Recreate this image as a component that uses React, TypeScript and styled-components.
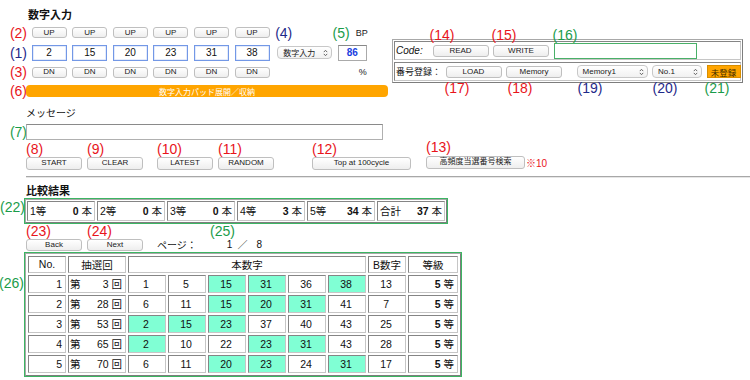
import React from 'react';
import styled, { createGlobalStyle, css } from 'styled-components';

const GlobalStyle = createGlobalStyle`
  html, body {
    margin: 0;
    padding: 0;
    background: #fff;
  }
  body {
    width: 750px;
    height: 380px;
    overflow: hidden;
    font-family: 'Liberation Sans', 'Noto Sans CJK JP', sans-serif;
    color: #111;
  }
  * {
    box-sizing: border-box;
  }
`;

type Tone = 'red' | 'navy' | 'green';
const toneColor: Record<Tone, string> = {
  red: '#e8141b',
  navy: '#1f2a8a',
  green: '#1a9c4a',
};

const Mark = styled.span<{ $tone: Tone }>`
  font-family: 'Liberation Sans', sans-serif;
  font-size: 14px;
  line-height: 14px;
  color: ${(p) => toneColor[p.$tone]};
  white-space: nowrap;
`;

// annotation label that hangs over/under a control
const Callout = styled(Mark)<{ $below?: boolean; $dx?: number; $dy?: number }>`
  position: absolute;
  left: ${(p) => p.$dx ?? 0}px;
  ${(p) =>
    p.$below
      ? css`top: calc(100% + ${p.$dy ?? 3}px);`
      : css`bottom: calc(100% + ${p.$dy ?? 3}px);`}
`;

const Anchor = styled.span<{ $ml?: number }>`
  position: relative;
  display: inline-flex;
  margin-left: ${(p) => p.$ml ?? 0}px;
`;

const Btn = styled.button<{ $w: number; $h?: number }>`
  width: ${(p) => p.$w}px;
  height: ${(p) => p.$h ?? 12}px;
  padding: 0;
  margin: 0;
  font-family: 'Liberation Sans', 'Noto Sans CJK JP', sans-serif;
  font-size: 8px;
  line-height: 1;
  color: #1a1a1a;
  background: linear-gradient(#ffffff, #eeeeee);
  border: 1px solid #bfbfbf;
  border-radius: 3px;
  display: flex;
  align-items: center;
  justify-content: center;
  white-space: nowrap;
`;

const FakeSelect = styled.div<{ $w: number }>`
  width: ${(p) => p.$w}px;
  height: 13px;
  border: 1px solid #c8c8c8;
  border-radius: 4px;
  background: linear-gradient(#ffffff, #f1f1f1);
  display: flex;
  align-items: center;
  justify-content: space-between;
  padding: 0 3px 0 5px;
  font-size: 8px;
  color: #222;
  white-space: nowrap;
`;

const UpDown = () => (
  <svg width="5" height="8" viewBox="0 0 5 8">
    <path
      d="M0.8 3.1 L2.5 1.3 L4.2 3.1 M0.8 4.9 L2.5 6.7 L4.2 4.9"
      fill="none"
      stroke="#555"
      strokeWidth="0.9"
    />
  </svg>
);

/* ---------- top: number pad + code panel ---------- */

const Top = styled.div`
  display: flex;
  align-items: flex-start;
`;

const PadColumn = styled.div`
  width: 388px;
  padding-top: 9px;
`;

const Heading = styled.div<{ $indent?: number; $top?: number }>`
  margin-left: ${(p) => p.$indent ?? 26}px;
  margin-top: ${(p) => p.$top ?? 0}px;
  font-size: 11px;
  line-height: 13px;
  font-weight: bold;
`;

const PadGrid = styled.div`
  margin-top: 4px;
  display: grid;
  grid-template-columns: 26px repeat(6, 35px) 57px 30px;
  grid-template-rows: 13px 16px 12px;
  column-gap: 5.6px;
  row-gap: 5.5px;
  align-items: center;
`;

const Gutter = styled(Mark)`
  justify-self: end;
  margin-right: -1px;
`;

const NumBox = styled.div`
  height: 16px;
  border: 1px solid #7398e6;
  box-shadow: inset 0 0 0 0.5px #c9d8f7;
  font-size: 10px;
  display: flex;
  align-items: center;
  justify-content: center;
`;

const BpHead = styled.div`
  grid-column: 8 / 10;
  display: flex;
  justify-content: space-between;
  align-items: center;
`;

const BpGroup = styled.span`
  display: flex;
  align-items: center;
  gap: 6px;
  margin-left: -5px;
`;

const Small = styled.span`
  font-size: 9px;
  color: #222;
`;

const BpBox = styled.div`
  width: 29px;
  height: 16px;
  border: 1px solid #aaa;
  border-top-color: #888;
  font-size: 10px;
  font-weight: bold;
  color: #1a3ee0;
  display: flex;
  align-items: center;
  justify-content: center;
`;

const Percent = styled(Small)`
  grid-column: 9;
  justify-self: end;
  margin-right: 1px;
`;

const GutterRow = styled.div<{ $gutter?: number; $top?: number }>`
  display: grid;
  grid-template-columns: ${(p) => p.$gutter ?? 26}px auto;
  align-items: center;
  margin-top: ${(p) => p.$top ?? 0}px;
`;

const PadToggle = styled.div`
  width: 362px;
  height: 12px;
  background: #ffa500;
  border-radius: 4px;
  color: #fff;
  font-size: 8px;
  display: flex;
  align-items: center;
  justify-content: center;
`;

const CodePanel = styled.div`
  margin: 39px 0 0 4px;
  width: 351px;
  border: 1px solid;
  border-color: #a8a8a8 #7d7d7d #7d7d7d #a8a8a8;
  padding: 1px;
  display: flex;
  flex-direction: column;
  gap: 2px;
`;

const insetCell = css`
  border: 1px solid;
  border-color: #858585 #c6c6c6 #c6c6c6 #858585;
`;

const PanelRow = styled.div`
  height: 19px;
  ${insetCell};
  display: flex;
  align-items: center;
  gap: 4.5px;
  padding-left: 1px;
`;

const PanelLabel = styled.span<{ $w: number; $italic?: boolean }>`
  width: ${(p) => p.$w}px;
  font-size: ${(p) => (p.$italic ? 10 : 9)}px;
  font-style: ${(p) => (p.$italic ? 'italic' : 'normal')};
  white-space: nowrap;
`;

const CodeInput = styled.div`
  width: 143px;
  height: 16px;
  border: 1px solid #49b068;
`;

const Unregistered = styled.div`
  width: 34px;
  height: 13px;
  background: #ffa500;
  border: 1px solid #d98e00;
  font-size: 8.5px;
  color: #3a2a00;
  display: flex;
  align-items: center;
  justify-content: center;
`;

/* ---------- message + actions ---------- */

const Label = styled.div`
  margin: 10px 0 0 26px;
  font-size: 10px;
  line-height: 12px;
`;

const MessageBox = styled.div`
  width: 357px;
  height: 16px;
  border: 1px solid #b0b0b0;
  border-top-color: #8a8a8a;
`;

const ActionRow = styled.div`
  display: flex;
  align-items: flex-end;
  padding-left: 26px;
`;

const Stack = styled.div<{ $ml?: number }>`
  display: flex;
  flex-direction: column;
  align-items: flex-start;
  gap: 1px;
  margin-left: ${(p) => p.$ml ?? 0}px;
`;

const StackLine = styled.div`
  display: flex;
  align-items: center;
  gap: 1px;
`;

const Note = styled.span`
  font-size: 10px;
  color: #e8141b;
`;

const Rule = styled.div`
  margin: 6px 0 0 26px;
  height: 2px;
  border-top: 1px solid #a8a8a8;
  border-bottom: 1px solid #e6e6e6;
`;

/* ---------- results ---------- */

const GreenFrame = styled.div<{ $w?: number }>`
  border: 1px solid #3cb563;
  width: ${(p) => (p.$w ? `${p.$w}px` : 'auto')};
`;

const SummaryGrid = styled.div`
  display: grid;
  grid-template-columns: repeat(6, 68px);
  gap: 2px;
  padding: 1px;
  border: 1px solid;
  border-color: #a8a8a8 #7d7d7d #7d7d7d #a8a8a8;
`;

const SumCell = styled.div`
  height: 20px;
  ${insetCell};
  display: flex;
  align-items: center;
  justify-content: space-between;
  padding: 0 2px;
  font-size: 10.5px;
  white-space: nowrap;
`;

const PagerText = styled.div`
  height: 12px;
  display: flex;
  align-items: center;
  font-size: 10px;
  white-space: nowrap;
`;

const Gap = styled.span<{ $w: number }>`
  display: inline-block;
  width: ${(p) => p.$w}px;
`;

const TableRow = styled.div`
  display: flex;
  align-items: flex-start;
  margin-top: 1px;
`;

const TableGutter = styled.div`
  width: 24px;
  display: flex;
  justify-content: flex-end;
  padding-top: 24px;
`;

const Results = styled.table`
  border-collapse: separate;
  border-spacing: 2px;
  border: 1px solid;
  border-color: #a8a8a8 #7d7d7d #7d7d7d #a8a8a8;
  table-layout: fixed;
  width: 436px;
  font-size: 10.5px;
`;

const Th = styled.th`
  height: 17px;
  padding: 0;
  font-weight: normal;
  text-align: center;
  ${insetCell};
`;

const Td = styled.td<{ $hit?: boolean; $align?: 'left' | 'center' | 'right' }>`
  height: 18px;
  padding: 0 3px 0 1px;
  text-align: ${(p) => p.$align ?? 'center'};
  background: ${(p) => (p.$hit ? '#80ffd4' : '#fff')};
  ${insetCell};
  white-space: nowrap;
`;

const Split = styled.div`
  display: flex;
  justify-content: space-between;
`;

const picks = [2, 15, 20, 23, 31, 38];

const summary: [string, number][] = [
  ['1等', 0],
  ['2等', 0],
  ['3等', 0],
  ['4等', 3],
  ['5等', 34],
  ['合計', 37],
];

const rows = [
  { no: 1, draw: 3, nums: [1, 5, 15, 31, 36, 38], b: 13, grade: 5 },
  { no: 2, draw: 28, nums: [6, 11, 15, 20, 31, 41], b: 7, grade: 5 },
  { no: 3, draw: 53, nums: [2, 15, 23, 37, 40, 43], b: 25, grade: 5 },
  { no: 4, draw: 65, nums: [2, 10, 22, 23, 31, 43], b: 28, grade: 5 },
  { no: 5, draw: 70, nums: [6, 11, 20, 23, 24, 31], b: 17, grade: 5 },
];

const App = () => {
  return (
    <>
      <GlobalStyle />
      <Top>
        <PadColumn>
          <Heading $indent={28}>数字入力</Heading>
          <PadGrid>
            <Gutter $tone="red">(2)</Gutter>
            {picks.map((_, i) => (
              <Btn key={'up' + i} $w={35} $h={11}>UP</Btn>
            ))}
            <BpHead>
              <Mark $tone="navy">(4)</Mark>
              <BpGroup>
                <Mark $tone="green">(5)</Mark>
                <Small>BP</Small>
              </BpGroup>
            </BpHead>

            <Gutter $tone="navy">(1)</Gutter>
            {picks.map((n) => (
              <NumBox key={'n' + n}>{n}</NumBox>
            ))}
            <Anchor $ml={2}>
              <FakeSelect $w={55}>
                数字入力
                <UpDown />
              </FakeSelect>
            </Anchor>
            <BpBox>86</BpBox>

            <Gutter $tone="red">(3)</Gutter>
            {picks.map((_, i) => (
              <Btn key={'dn' + i} $w={35} $h={11}>DN</Btn>
            ))}
            <Percent>%</Percent>
          </PadGrid>
          <GutterRow $top={6}>
            <Gutter $tone="red">(6)</Gutter>
            <PadToggle>数字入力パッド展開／収納</PadToggle>
          </GutterRow>
        </PadColumn>

        <CodePanel>
          <PanelRow>
            <PanelLabel $w={32} $italic>Code:</PanelLabel>
            <Anchor>
              <Btn $w={56}>READ</Btn>
              <Callout $tone="red" $dx={-3} $dy={3}>(14)</Callout>
            </Anchor>
            <Anchor>
              <Btn $w={56}>WRITE</Btn>
              <Callout $tone="red" $dx={-1.5} $dy={3}>(15)</Callout>
            </Anchor>
            <Anchor>
              <CodeInput />
              <Callout $tone="green" $dx={-1} $dy={1}>(16)</Callout>
            </Anchor>
          </PanelRow>
          <PanelRow>
            <PanelLabel $w={50}>番号登録：</PanelLabel>
            <Anchor>
              <Btn $w={56}>LOAD</Btn>
              <Callout $tone="red" $below $dx={-1} $dy={3.5}>(17)</Callout>
            </Anchor>
            <Anchor>
              <Btn $w={56}>Memory</Btn>
              <Callout $tone="red" $below $dx={1.5} $dy={3.5}>(18)</Callout>
            </Anchor>
            <Anchor $ml={10}>
              <FakeSelect $w={71}>
                Memory1
                <UpDown />
              </FakeSelect>
              <Callout $tone="navy" $below $dx={1} $dy={3}>(19)</Callout>
            </Anchor>
            <Anchor>
              <FakeSelect $w={50}>
                No.1
                <UpDown />
              </FakeSelect>
              <Callout $tone="navy" $below $dx={0.5} $dy={3}>(20)</Callout>
            </Anchor>
            <Anchor>
              <Unregistered>未登録</Unregistered>
              <Callout $tone="green" $below $dx={-2} $dy={3}>(21)</Callout>
            </Anchor>
          </PanelRow>
        </CodePanel>
      </Top>

      <Label>メッセージ</Label>
      <GutterRow $top={3.5}>
        <Gutter $tone="green">(7)</Gutter>
        <MessageBox />
      </GutterRow>

      <ActionRow>
        <Stack>
          <Mark $tone="red">(8)</Mark>
          <Btn $w={56} $h={13}>START</Btn>
        </Stack>
        <Stack $ml={5}>
          <Mark $tone="red">(9)</Mark>
          <Btn $w={56} $h={13}>CLEAR</Btn>
        </Stack>
        <Stack $ml={14}>
          <Mark $tone="red">(10)</Mark>
          <Btn $w={56} $h={13}>LATEST</Btn>
        </Stack>
        <Stack $ml={5}>
          <Mark $tone="red">(11)</Mark>
          <Btn $w={56} $h={13}>RANDOM</Btn>
        </Stack>
        <Stack $ml={38}>
          <Mark $tone="red">(12)</Mark>
          <Btn $w={99} $h={13}>Top at 100cycle</Btn>
        </Stack>
        <Stack $ml={15}>
          <Mark $tone="red">(13)</Mark>
          <StackLine>
            <Btn $w={99} $h={13}>高頻度当選番号検索</Btn>
            <Note>※10</Note>
          </StackLine>
        </Stack>
      </ActionRow>

      <Rule />

      <Heading $top={7}>比較結果</Heading>
      <GutterRow $gutter={24}>
        <Gutter $tone="green" style={{ alignSelf: 'start', marginTop: 2 }}>
          (22)
        </Gutter>
        <GreenFrame $w={424}>
          <SummaryGrid>
            {summary.map(([name, count]) => (
              <SumCell key={name}>
                <span>{name}</span>
                <span>
                  <b>{count}</b> 本
                </span>
              </SumCell>
            ))}
          </SummaryGrid>
        </GreenFrame>
      </GutterRow>

      <ActionRow>
        <Stack>
          <Mark $tone="red">(23)</Mark>
          <Btn $w={56}>Back</Btn>
        </Stack>
        <Stack $ml={5}>
          <Mark $tone="red">(24)</Mark>
          <Btn $w={56}>Next</Btn>
        </Stack>
        <Stack $ml={14}>
          <Mark $tone="green" style={{ marginLeft: 53 }}>(25)</Mark>
          <PagerText>
            ページ：<Gap $w={30} />1<Gap $w={5} />／<Gap $w={9} />8
          </PagerText>
        </Stack>
      </ActionRow>

      <TableRow>
        <TableGutter>
          <Mark $tone="green">(26)</Mark>
        </TableGutter>
        <GreenFrame>
          <Results>
            <colgroup>
              <col style={{ width: 38 }} />
              <col style={{ width: 58 }} />
              {picks.map((_, i) => (
                <col key={i} style={{ width: 38 }} />
              ))}
              <col style={{ width: 38 }} />
              <col style={{ width: 50 }} />
            </colgroup>
            <thead>
              <tr>
                <Th>No.</Th>
                <Th>抽選回</Th>
                <Th colSpan={6}>本数字</Th>
                <Th>B数字</Th>
                <Th>等級</Th>
              </tr>
            </thead>
            <tbody>
              {rows.map((r) => (
                <tr key={r.no}>
                  <Td $align="right">{r.no}</Td>
                  <Td>
                    <Split>
                      <span>第</span>
                      <span>{r.draw} 回</span>
                    </Split>
                  </Td>
                  {r.nums.map((n, i) => (
                    <Td key={i} $hit={picks.includes(n)}>
                      {n}
                    </Td>
                  ))}
                  <Td>{r.b}</Td>
                  <Td $align="right">
                    <b>{r.grade}</b> 等
                  </Td>
                </tr>
              ))}
            </tbody>
          </Results>
        </GreenFrame>
      </TableRow>
    </>
  );
};

export default App;
